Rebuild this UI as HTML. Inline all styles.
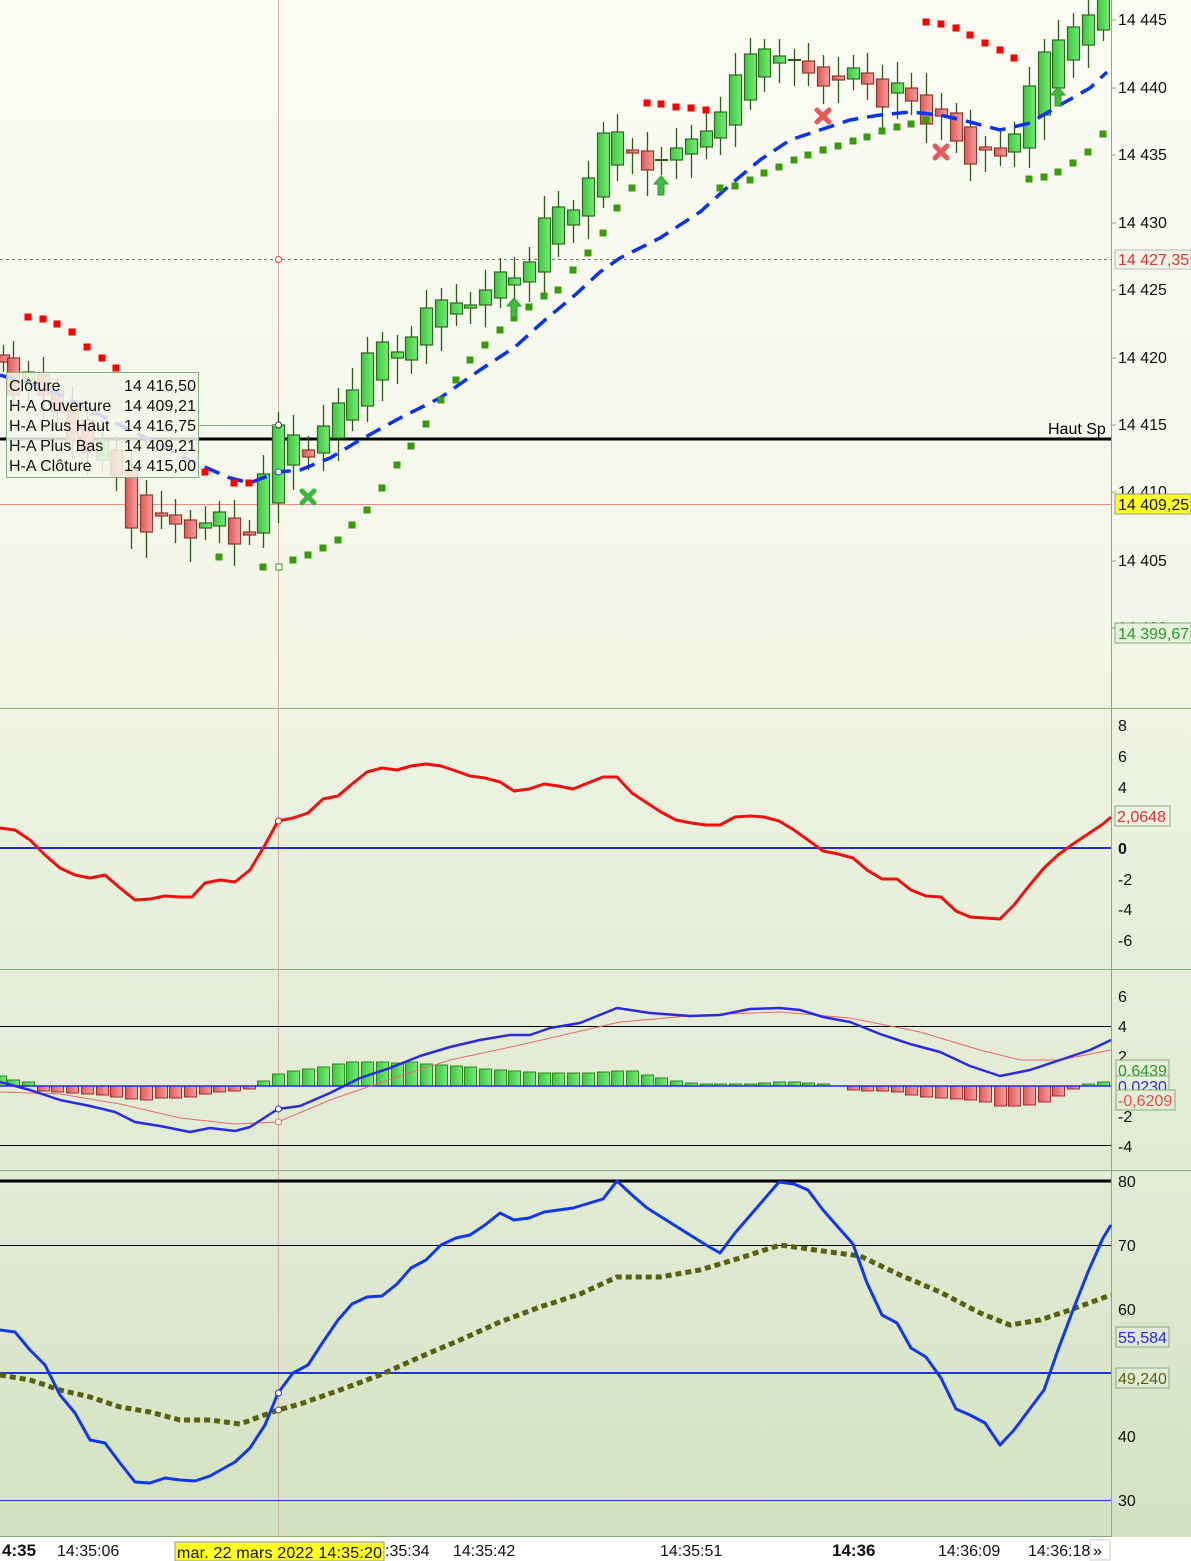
<!DOCTYPE html>
<html><head><meta charset="utf-8"><style>
html,body{margin:0;padding:0;width:1191px;height:1561px;overflow:hidden;background:#fff}
svg{display:block;font-family:"Liberation Sans",sans-serif}
</style></head><body>
<svg id="s" width="1191" height="1561" xmlns="http://www.w3.org/2000/svg">
<defs>
<linearGradient id="g1" x1="0" y1="0" x2="0" y2="1"><stop offset="0" stop-color="#fbfcf4"/><stop offset="1" stop-color="#f1f5e6"/></linearGradient>
<linearGradient id="g2" x1="0" y1="0" x2="0" y2="1"><stop offset="0" stop-color="#eef3e3"/><stop offset="1" stop-color="#e6eed9"/></linearGradient>
<linearGradient id="g3" x1="0" y1="0" x2="0" y2="1"><stop offset="0" stop-color="#e6eed9"/><stop offset="1" stop-color="#e1ead3"/></linearGradient>
<linearGradient id="g4" x1="0" y1="0" x2="0" y2="1"><stop offset="0" stop-color="#e2ebd5"/><stop offset="1" stop-color="#d4e2c3"/></linearGradient>
<linearGradient id="cg" x1="0" y1="0" x2="1" y2="0"><stop offset="0" stop-color="#3ec83e"/><stop offset="1" stop-color="#7ae87a"/></linearGradient>
<linearGradient id="cr" x1="0" y1="0" x2="1" y2="0"><stop offset="0" stop-color="#e05858"/><stop offset="1" stop-color="#f4a0a0"/></linearGradient>
</defs>
<rect x="0" y="0" width="1191" height="708" fill="url(#g1)"/>
<rect x="0" y="708" width="1191" height="262" fill="url(#g2)"/>
<rect x="0" y="970" width="1191" height="201" fill="url(#g3)"/>
<rect x="0" y="1171" width="1191" height="366" fill="url(#g4)"/>
<rect x="0" y="1537" width="1191" height="24" fill="#fff"/>
<g stroke="#8aaa7a" stroke-width="1">
<line x1="0" y1="708.5" x2="1191" y2="708.5"/>
<line x1="0" y1="969.5" x2="1191" y2="969.5"/>
<line x1="0" y1="1170.5" x2="1191" y2="1170.5"/>
<line x1="0" y1="1536.5" x2="1111" y2="1536.5"/>
<line x1="1111.5" y1="0" x2="1111.5" y2="1537"/>
</g>
<line x1="0" y1="259.5" x2="1111" y2="259.5" stroke="#777" stroke-dasharray="3,3"/>
<line x1="0" y1="439" x2="1111" y2="439" stroke="#000" stroke-width="3"/>
<line x1="0" y1="504.5" x2="1111" y2="504.5" stroke="#f08a80"/>
<line x1="278.5" y1="0" x2="278.5" y2="1537" stroke="#d0b0a0"/>
<text x="1048" y="434" font-size="16">Haut Sp</text>
<g id="candles"></g>
<polyline fill="none" stroke="#0a32f0" stroke-width="3.5" stroke-dasharray="16,9" points="0,375 50,390 100,415 150,440 200,465 230,478 250,483 278,472 300,470 330,458 360,440 400,418 440,398 480,370 515,347 545,320 575,295 600,272 620,258 660,238 700,212 730,185 760,160 790,140 820,130 850,120 880,115 910,112 940,115 970,122 1000,130 1030,123 1060,105 1090,88 1107,72"/>
<g id="dots"></g>
<g fill="#3cc03c" stroke="#2a9a2a">
<path d="M661,176 l-7,8 h4 v11 h6 v-11 h4 z"/>
<path d="M514,298 l-7,8 h4 v11 h6 v-11 h4 z"/>
<path d="M1058,87 l-7,8 h4 v11 h6 v-11 h4 z"/>
</g>
<g stroke-width="5" stroke-linecap="round">
<path d="M817,110 l12,12 M829,110 l-12,12" stroke="#e85858"/>
<path d="M935,146 l12,12 M947,146 l-12,12" stroke="#e85858"/>
<path d="M302,491 l12,12 M314,491 l-12,12" stroke="#3cb83c"/>
</g>
<circle cx="278.5" cy="425" r="3" fill="#fff" stroke="#333"/>
<circle cx="278.5" cy="472" r="3" fill="#fff" stroke="#2050f0"/>
<circle cx="278.5" cy="259.5" r="3" fill="#fff" stroke="#e04040"/>
<rect x="276" y="564" width="6" height="6" fill="#fff" stroke="#3a9a1a"/>
<rect x="6.5" y="372.5" width="192" height="105" fill="#f4f6ea" fill-opacity="0.85" stroke="#8aaa80"/>
<line x1="198" y1="425.5" x2="276" y2="425.5" stroke="#8aaa80"/>
<g font-size="16" fill="#111">
<text x="9" y="391">Clôture</text><text x="124" y="391" textLength="72">14 416,50</text>
<text x="9" y="411">H-A Ouverture</text><text x="124" y="411" textLength="72">14 409,21</text>
<text x="9" y="431">H-A Plus Haut</text><text x="124" y="431" textLength="72">14 416,75</text>
<text x="9" y="451">H-A Plus Bas</text><text x="124" y="451" textLength="72">14 409,21</text>
<text x="9" y="471">H-A Clôture</text><text x="124" y="471" textLength="72">14 415,00</text>
</g>
<g font-size="16" fill="#111">
<text x="1118" y="25">14 445</text><text x="1118" y="93">14 440</text><text x="1118" y="160">14 435</text><text x="1118" y="228">14 430</text><text x="1118" y="295">14 425</text><text x="1118" y="363">14 420</text><text x="1118" y="430">14 415</text><text x="1118" y="497">14 410</text><text x="1118" y="566">14 405</text><text x="1118" y="633">14 400</text>
</g>
<g stroke="#8aaa7a"><path d="M1111,20h5M1111,88h5M1111,155h5M1111,223h5M1111,290h5M1111,358h5M1111,425h5M1111,492h5M1111,561h5M1111,628h5"/></g>
<rect x="1115" y="250" width="76" height="19" fill="#f4f4e8" stroke="#bbb"/><text x="1118" y="265" font-size="16" fill="#e03030">14 427,35</text>
<rect x="1115" y="494" width="76" height="20" fill="#ffff20" stroke="#999"/><text x="1118" y="510" font-size="16" fill="#111">14 409,25</text>
<rect x="1115" y="623" width="76" height="20" fill="#e6f2dc" stroke="#8aaa7a"/><text x="1118" y="639" font-size="16" fill="#2a9a2a">14 399,67</text>
<line x1="0" y1="848" x2="1111" y2="848" stroke="#2030d0" stroke-width="2"/>
<polyline fill="none" stroke="#f01010" stroke-width="3" stroke-linejoin="round" points="0,828 15,830 30,840 45,855 60,868 75,875 90,878 105,875 120,888 135,900 150,899 165,896 180,897 192,897 205,883 220,880 235,882 250,870 265,845 278,821 293,818 308,813 323,799 338,796 352,784 367,772 382,768 397,770 411,766 426,764 441,766 456,771 470,776 485,778 500,782 514,791 529,789 544,784 558,786 573,789 588,783 603,777 617,777 632,793 647,803 661,812 676,820 691,823 706,825 720,825 735,817 750,816 764,817 779,821 794,830 808,840 823,851 838,854 853,858 867,870 882,879 897,879 911,890 926,896 941,897 956,911 970,917 985,918 1000,919 1014,905 1029,886 1044,868 1058,855 1073,844 1088,834 1103,824 1111,817"/>
<circle cx="278.5" cy="821" r="3" fill="#fff" stroke="#f01010"/>
<g font-size="16" fill="#111"><text x="1118" y="731">8</text><text x="1118" y="762">6</text><text x="1118" y="793">4</text><text x="1118" y="854" font-weight="bold">0</text><text x="1118" y="885">-2</text><text x="1118" y="915">-4</text><text x="1118" y="946">-6</text></g>
<rect x="1115" y="806" width="55" height="20" fill="#eef4e4" stroke="#8aaa7a"/><text x="1117" y="822" font-size="16" fill="#e03030">2,0648</text>
<line x1="0" y1="1026.5" x2="1111" y2="1026.5" stroke="#000"/>
<line x1="0" y1="1145.5" x2="1111" y2="1145.5" stroke="#000"/>
<g id="hist"></g>
<line x1="0" y1="1086" x2="1111" y2="1086" stroke="#2030e0" stroke-width="1.5"/>
<polyline fill="none" stroke="#e86a6a" stroke-width="1" points="0,1092 60,1094 120,1104 180,1118 235,1124 278,1122 330,1100 400,1076 450,1060 520,1045 620,1022 700,1015 780,1012 850,1018 920,1032 980,1050 1020,1060 1060,1060 1111,1050"/>
<polyline fill="none" stroke="#2a2ae0" stroke-width="2.5" stroke-linejoin="round" points="0,1082 30,1090 60,1100 90,1106 115,1112 135,1122 160,1126 190,1132 210,1128 235,1131 250,1127 278,1109 300,1106 330,1093 360,1078 390,1068 420,1056 450,1047 480,1040 510,1035 530,1035 550,1028 580,1023 617,1008 650,1013 690,1016 720,1015 750,1009 780,1008 800,1010 823,1017 850,1022 880,1034 910,1044 940,1052 970,1066 1000,1076 1030,1070 1060,1060 1090,1050 1111,1040"/>
<circle cx="278.5" cy="1109" r="3" fill="#fff" stroke="#2a2ae0"/><circle cx="278.5" cy="1122" r="3" fill="#fff" stroke="#e86a6a"/>
<g font-size="16" fill="#111"><text x="1118" y="1002">6</text><text x="1118" y="1032">4</text><text x="1118" y="1062">2</text><text x="1118" y="1122">-2</text><text x="1118" y="1152">-4</text></g>
<rect x="1116" y="1060" width="53" height="18" fill="#e6f0da" stroke="#8aaa7a"/><text x="1118" y="1076" font-size="16" fill="#2a9a2a">0,6439</text>
<rect x="1116" y="1076" width="53" height="17" fill="#e6f0da" stroke="#8aaa7a"/><text x="1118" y="1092" font-size="16" fill="#2a2ae0">0,0230</text>
<rect x="1116" y="1090" width="59" height="20" fill="#e2ecd4" stroke="#8aaa7a"/><text x="1118" y="1106" font-size="16" fill="#e05050">-0,6209</text>
<line x1="0" y1="1181" x2="1111" y2="1181" stroke="#000" stroke-width="3"/>
<line x1="0" y1="1245.5" x2="1111" y2="1245.5" stroke="#000"/>
<line x1="0" y1="1373" x2="1111" y2="1373" stroke="#2030e0" stroke-width="2"/>
<line x1="0" y1="1500.5" x2="1111" y2="1500.5" stroke="#2030e0"/>
<polyline fill="none" stroke="#5a6010" stroke-width="5" stroke-dasharray="6,4" points="0,1375 30,1380 60,1390 90,1397 120,1407 150,1412 180,1420 210,1420 240,1424 278,1410 300,1404 340,1390 380,1375 420,1357 460,1340 500,1322 540,1307 580,1294 617,1277 660,1277 700,1270 740,1258 780,1245 830,1252 860,1256 900,1275 940,1292 980,1313 1010,1325 1040,1320 1070,1310 1111,1295"/>
<polyline fill="none" stroke="#1038f0" stroke-width="3" stroke-linejoin="round" points="0,1330 15,1332 30,1350 45,1365 60,1395 75,1413 90,1440 105,1443 120,1463 135,1482 150,1483 165,1478 180,1480 195,1481 210,1476 235,1462 250,1448 265,1425 278,1393 293,1373 308,1365 323,1342 338,1320 352,1304 367,1297 382,1296 397,1284 411,1268 426,1260 441,1245 456,1238 470,1235 485,1225 500,1213 514,1220 529,1218 544,1212 573,1208 603,1199 617,1181 632,1195 647,1208 706,1245 720,1253 735,1233 779,1182 794,1184 808,1190 823,1210 838,1227 853,1244 867,1283 882,1315 897,1323 911,1348 926,1357 941,1378 956,1409 970,1415 985,1423 1000,1445 1014,1430 1029,1410 1044,1390 1058,1350 1073,1310 1088,1272 1103,1238 1111,1225"/>
<circle cx="278.5" cy="1393" r="3" fill="#fff" stroke="#1038f0"/><circle cx="278.5" cy="1410" r="3" fill="#fff" stroke="#5a6010"/>
<g font-size="16" fill="#111"><text x="1118" y="1187">80</text><text x="1118" y="1251">70</text><text x="1118" y="1315">60</text><text x="1118" y="1442">40</text><text x="1118" y="1506">30</text></g>
<rect x="1116" y="1327" width="53" height="20" fill="#e0ead4" stroke="#8aaa7a"/><text x="1118" y="1343" font-size="16" fill="#2a2ae0">55,584</text>
<rect x="1116" y="1368" width="53" height="20" fill="#e0ead4" stroke="#8aaa7a"/><text x="1118" y="1384" font-size="16" fill="#5a6010">49,240</text>
<g font-size="16" fill="#111">
<text x="2" y="1556" font-weight="bold" font-size="17">4:35</text>
<text x="57" y="1556">14:35:06</text>
<text x="385" y="1556">:35:34</text>
<text x="453" y="1556">14:35:42</text>
<text x="660" y="1556">14:35:51</text>
<text x="832" y="1556" font-weight="bold" font-size="17">14:36</text>
<text x="938" y="1556">14:36:09</text>
<text x="1028" y="1556">14:36:18</text>
</g>
<rect x="175" y="1542" width="209" height="19" fill="#ffff20" stroke="#999"/>
<text x="177" y="1558" font-size="16" fill="#111" textLength="205">mar. 22 mars 2022 14:35:20</text>
<rect x="1090" y="1540" width="20" height="20" fill="#fff" stroke="#ccc"/><text x="1093" y="1556" font-size="16">»</text>
</svg>
<script>
var C=[[3,355,362,'r'],[13,358,395,'r'],[28,372,380,'g'],[43,375,395,'r'],[57,390,412,'r'],[72,405,440,'r'],[87,420,452,'r'],[102,440,460,'g'],[116,450,475,'r'],[131,470,528,'r'],[146,495,532,'r'],[161,513,515,'r'],[175,515,524,'r'],[190,520,538,'r'],[205,523,528,'g'],[219,512,526,'g'],[234,518,544,'r'],[249,532,535,'r'],[263,474,533,'g'],[278,425,503,'g'],[293,435,465,'g'],[308,450,457,'r'],[323,426,453,'g'],[338,403,438,'g'],[352,390,420,'g'],[367,353,406,'g'],[382,342,380,'g'],[397,352,358,'g'],[411,337,360,'g'],[426,308,345,'g'],[441,300,327,'g'],[456,303,314,'g'],[470,305,307,'g'],[485,290,305,'g'],[500,272,298,'g'],[514,278,285,'g'],[529,262,282,'g'],[544,218,272,'g'],[558,207,244,'g'],[573,210,225,'g'],[588,178,216,'g'],[603,133,197,'g'],[617,132,165,'g'],[632,150,153,'r'],[647,151,170,'r'],[661,160,161,'d'],[676,148,160,'g'],[691,139,154,'g'],[706,131,147,'g'],[720,112,138,'g'],[735,75,125,'g'],[750,54,100,'g'],[764,49,77,'g'],[779,56,63,'g'],[794,60,61,'d'],[808,61,73,'r'],[823,67,86,'r'],[838,76,80,'r'],[853,68,79,'g'],[867,73,84,'r'],[882,79,107,'r'],[897,83,93,'g'],[911,88,101,'r'],[926,95,124,'r'],[941,109,116,'r'],[956,113,141,'r'],[970,127,164,'r'],[985,147,150,'r'],[1000,148,156,'r'],[1014,134,152,'g'],[1029,86,148,'g'],[1044,52,115,'g'],[1058,40,88,'g'],[1073,27,60,'g'],[1088,15,45,'g'],[1103,-2,30,'g']];
var g=document.getElementById('candles'),h='';
C.forEach(function(c,i){var x=c[0],t=c[1],b=c[2],k=c[3];var wt=t-10-(i*7%13),wb=b+10+(i*5%17);
h+='<line x1="'+(x+.5)+'" y1="'+wt+'" x2="'+(x+.5)+'" y2="'+wb+'" stroke="#2d5a14" stroke-width="1.3"/>';
if(k=='d'){h+='<line x1="'+(x-6)+'" y1="'+t+'" x2="'+(x+7)+'" y2="'+t+'" stroke="#2d5a14" stroke-width="2"/>';}
else{h+='<rect x="'+(x-5.5)+'" y="'+t+'" width="12" height="'+Math.max(3,b-t)+'" fill="url(#c'+k+')" stroke="'+(k=='g'?'#2a6a1a':'#8a3a2a')+'" stroke-width="1.2"/>';}});
g.innerHTML=h;
var R=[[28,317],[43,319],[57,324],[72,332],[87,347],[102,358],[116,368],[205,472],[234,483],[249,483],[647,103],[661,104],[676,107],[691,108],[706,110],[926,22],[941,24],[956,28],[970,35],[985,43],[1000,50],[1014,58]];
var G=[[219,557],[263,567],[293,560],[308,555],[323,548],[338,540],[352,525],[367,510],[382,488],[397,465],[411,446],[426,424],[441,400],[456,380],[470,360],[485,345],[500,330],[514,318],[529,307],[544,296],[558,290],[573,270],[588,253],[603,233],[617,208],[632,188],[720,188],[735,186],[750,180],[764,173],[779,167],[794,160],[808,155],[823,150],[838,146],[853,141],[867,137],[882,131],[897,127],[911,124],[926,120],[1029,179],[1044,177],[1058,172],[1073,163],[1088,152],[1103,134]];
h='';R.forEach(function(p){h+='<rect x="'+(p[0]-3.5)+'" y="'+(p[1]-3.5)+'" width="7" height="7" fill="#f00"/>'});
G.forEach(function(p){h+='<rect x="'+(p[0]-3.5)+'" y="'+(p[1]-3.5)+'" width="7" height="7" fill="#3a9a0a"/>'});
document.getElementById('dots').innerHTML=h;
var H=[6,6,4,-5,-6,-7,-8,-9,-11,-13,-14,-12,-12,-11,-8,-6,-5,-3,5,12,15,17,19,22,24,24,24,23,24,22,21,20,19,17,16,15,14,13,13,13,13,14,15,15,11,8,5,3,2,2,2,2,3,4,4,3,2,0,-4,-5,-5,-6,-9,-11,-12,-13,-14,-16,-20,-20,-19,-16,-10,-3,2,4,7,10];
h='';H.forEach(function(v,i){var x=C[i]?C[i][0]:0;if(!v)return;var y=v>0?1086-v:1086,hh=Math.abs(v);
h+='<rect x="'+(x-5.5)+'" y="'+y+'" width="12" height="'+hh+'" fill="url(#c'+(v>0?'g':'r')+')" stroke="'+(v>0?'#2a8a1a':'#a03030')+'"/>'});
document.getElementById('hist').innerHTML=h;
</script>
</body></html>
